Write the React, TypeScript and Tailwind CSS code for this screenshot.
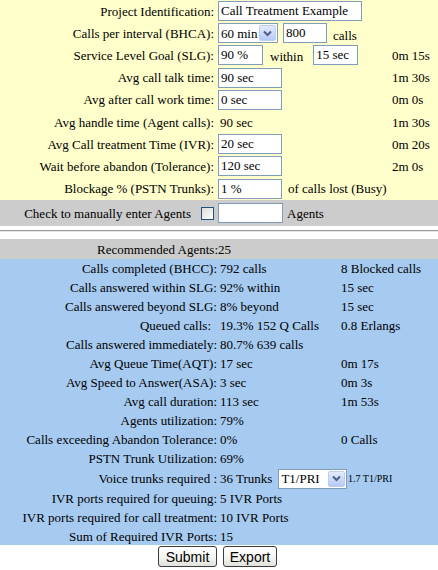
import React from 'react';

const Chevron = () => (
  <svg width="9" height="7" viewBox="0 0 9 7">
    <path d="M1 1.5 L4.5 5 L8 1.5" fill="none" stroke="#4d6185" strokeWidth="2" />
  </svg>
);

const FakeSelect: React.FC<{ value: string; w: string }> = ({ value, w }) => (
  <div className={`flex items-center h-[20px] border border-[#7f9db9] bg-white ${w}`}>
    <span className="flex-1 pl-[2px] leading-none">{value}</span>
    <span className="h-[16px] w-[17px] mr-[1px] flex items-center justify-center rounded-[2px] bg-gradient-to-b from-[#e3ebfe] to-[#b6c9f6] border border-[#bccdf4]">
      <Chevron />
    </span>
  </div>
);

const Field: React.FC<{ value: string; w: string }> = ({ value, w }) => (
  <input
    readOnly
    value={value}
    className={`h-[20px] border border-[#7f9db9] bg-white pl-[2px] text-[13px] leading-none outline-none font-[family-name:Liberation_Serif] ${w}`}
  />
);

const TopRow: React.FC<{ label: string; extra?: string; children: React.ReactNode }> = ({ label, extra, children }) => (
  <div className="flex items-center h-[22.2px]">
    <div className="w-[215px] shrink-0 text-right pr-[1px]">{label}</div>
    <div className="w-[177px] shrink-0 flex items-center pl-[3px]">{children}</div>
    {extra && <div>{extra}</div>}
  </div>
);

const results: [string, string, string, boolean?][] = [
  ['Calls completed (BHCC):', '792 calls', '8 Blocked calls'],
  ['Calls answered within SLG:', '92% within', '15 sec'],
  ['Calls answered beyond SLG:', '8% beyond', '15 sec'],
  ['Queued calls:', '19.3% 152 Q Calls', '0.8 Erlangs', true],
  ['Calls answered immediately:', '80.7% 639 calls', ''],
  ['Avg Queue Time(AQT):', '17 sec', '0m 17s'],
  ['Avg Speed to Answer(ASA):', '3 sec', '0m 3s'],
  ['Avg call duration:', '113 sec', '1m 53s'],
  ['Agents utilization:', '79%', ''],
  ['Calls exceeding Abandon Tolerance:', '0%', '0 Calls'],
  ['PSTN Trunk Utilization:', '69%', ''],
];

const ivrRows = [
  ['IVR ports required for queuing:', '5 IVR Ports'],
  ['IVR ports required for call treatment:', '10 IVR Ports'],
  ['Sum of Required IVR Ports:', '15'],
];

const ResultRow: React.FC<{ label: string; value: React.ReactNode; extra?: React.ReactNode; pad?: boolean; h?: string }> = ({
  label,
  value,
  extra,
  pad,
  h = 'h-[19px]',
}) => (
  <div className={`flex items-center ${h}`}>
    <div className={`w-[217px] shrink-0 text-right ${pad ? 'pr-[6px]' : ''}`}>{label}</div>
    <div className="w-[124px] shrink-0 pl-[3px] flex items-center whitespace-nowrap">{value}</div>
    <div className="flex items-center">{extra}</div>
  </div>
);

const App: React.FC = () => {
  return (
    <div className="w-[438px] h-[570px] bg-white text-black text-[13px] leading-[15px] font-[family-name:Liberation_Serif] overflow-hidden">
      {/* inputs */}
      <div className="bg-[#ffffcc] h-[200px]">
        <TopRow label="Project Identification:">
          <Field value="Call Treatment Example" w="w-[144px]" />
        </TopRow>
        <TopRow label="Calls per interval (BHCA):">
          <FakeSelect value="60 min" w="w-[60px]" />
          <Field value="800" w="w-[44px] ml-[5px]" />
          <span className="ml-[6px] mt-[4px]">calls</span>
        </TopRow>
        <TopRow label="Service Level Goal (SLG):" extra="0m 15s">
          <Field value="90 %" w="w-[45px]" />
          <span className="ml-[7px] mt-[3px]">within</span>
          <Field value="15 sec" w="w-[45px] ml-[10px]" />
        </TopRow>
        <TopRow label="Avg call talk time:" extra="1m 30s">
          <Field value="90 sec" w="w-[64px]" />
        </TopRow>
        <TopRow label="Avg after call work time:" extra="0m 0s">
          <Field value="0 sec" w="w-[64px]" />
        </TopRow>
        <TopRow label="Avg handle time (Agent calls):" extra="1m 30s">
          <span className="pl-[2px]">90 sec</span>
        </TopRow>
        <TopRow label="Avg Call treatment Time (IVR):" extra="0m 20s">
          <Field value="20 sec" w="w-[64px]" />
        </TopRow>
        <TopRow label="Wait before abandon (Tolerance):" extra="2m 0s">
          <Field value="120 sec" w="w-[64px]" />
        </TopRow>
        <TopRow label="Blockage % (PSTN Trunks):">
          <Field value="1 %" w="w-[64px]" />
          <span className="ml-[6px] whitespace-nowrap">of calls lost (Busy)</span>
        </TopRow>
      </div>

      <div className="bg-[#cccccc] h-[26px] flex items-center">
        <div className="w-[215px] shrink-0 flex items-center justify-end pr-[1px]">
          <span>Check to manually enter Agents</span>
          <span className="ml-[10px] w-[13px] h-[13px] border border-[#1c5180] bg-gradient-to-br from-[#dcdcd7] to-white" />
        </div>
        <div className="pl-[3px] flex items-center">
          <Field value="" w="w-[65px]" />
          <span className="ml-[4px]">Agents</span>
        </div>
      </div>

      <div className="h-[13px] pt-[4px]">
        <div className="border-t border-[#9a9a9a] border-b border-b-[#e4e4e4]" />
      </div>

      {/* results */}
      <div className="bg-[#cccccc] h-[20px] flex items-center">
        <div className="w-[218px] shrink-0 text-right">Recommended Agents:</div>
        <div>25</div>
      </div>
      <div className="bg-[#a6caf0] h-[286px]">
        {results.map(([label, value, extra, pad]) => (
          <ResultRow key={label} label={label} value={value} extra={extra} pad={pad} />
        ))}
        <ResultRow
          label="Voice trunks required :"
          h="h-[21px]"
          value={
            <>
              <span>36 Trunks</span>
              <span className="ml-[6px] bg-[#a6caf0]">
                <FakeSelect value="T1/PRI" w="w-[69px]" />
              </span>
            </>
          }
          extra={<span className="ml-[7px] text-[10px]">1.7 T1/PRI</span>}
        />
        {ivrRows.map(([label, value]) => (
          <ResultRow key={label} label={label} value={value} />
        ))}
      </div>

      <div className="flex justify-center gap-[6px] pt-[1px] pr-[3px] font-[family-name:Liberation_Sans]">
        <button className="h-[21px] w-[59px] border border-[#3c3c3c] rounded-[3px] bg-gradient-to-b from-white via-[#f6f6f3] to-[#e2e2dc] text-[14px] leading-none">
          Submit
        </button>
        <button className="h-[21px] w-[54px] border border-[#3c3c3c] rounded-[3px] bg-gradient-to-b from-white via-[#f6f6f3] to-[#e2e2dc] text-[14px] leading-none">
          Export
        </button>
      </div>
    </div>
  );
};

export default App;
